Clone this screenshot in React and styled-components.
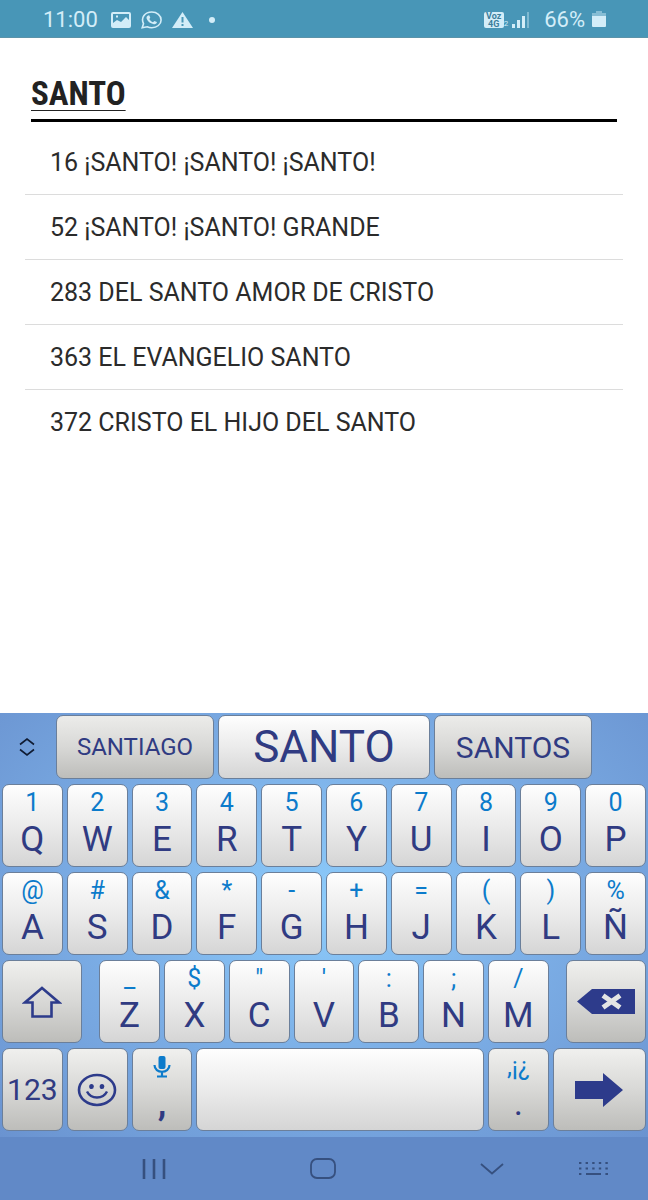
import React from "react";
import styled, { createGlobalStyle } from "styled-components";

const songs = [
  "16 ¡SANTO! ¡SANTO! ¡SANTO!",
  "52 ¡SANTO! ¡SANTO! GRANDE",
  "283 DEL SANTO AMOR DE CRISTO",
  "363 EL EVANGELIO SANTO",
  "372 CRISTO EL HIJO DEL SANTO",
];

const numberRow = [
  ["1", "Q"],
  ["2", "W"],
  ["3", "E"],
  ["4", "R"],
  ["5", "T"],
  ["6", "Y"],
  ["7", "U"],
  ["8", "I"],
  ["9", "O"],
  ["0", "P"],
];

const middleRow = [
  ["@", "A"],
  ["#", "S"],
  ["&", "D"],
  ["*", "F"],
  ["-", "G"],
  ["+", "H"],
  ["=", "J"],
  ["(", "K"],
  [")", "L"],
  ["%", "Ñ"],
];

const bottomRow = [
  ["_", "Z"],
  ["$", "X"],
  ['"', "C"],
  ["'", "V"],
  [":", "B"],
  [";", "N"],
  ["/", "M"],
];

const renderLetters = (letters) =>
  letters.map(([hint, letter]) => (
    <Key key={letter} type="button">
      <Hint>{hint}</Hint>
      <Letter>{letter}</Letter>
    </Key>
  ));

const StatusBar = () => (
  <Status>
    <StatusGroup>
      <span>11:00</span>
      <svg width="20" height="16" viewBox="0 0 20 16">
        <path
          fill="currentColor"
          fillRule="evenodd"
          d="M2 0h16q2 0 2 2v12q0 2-2 2H2q-2 0-2-2V2q0-2 2-2zM2 2v9l4-3 4 2 5-5 3 3V2zM5 3.500h2v2H5z"
        />
      </svg>
      <svg width="21" height="18" viewBox="0 0 21 18">
        <path
          fill="none"
          stroke="currentColor"
          strokeWidth="1.600"
          d="M1.200 16.800l1.300-4.100C-.5 6.500 4 1 10.800 1c5.200 0 9.300 3.500 9.300 7.900s-4.100 7.900-9.300 7.900c-1.700 0-3.200-.3-4.600-1z"
        />
        <path
          fill="currentColor"
          d="M7 4.500l1.200-.2 1.100 2.500-1 1.200c.8 1.600 2.100 2.600 3.700 3.200l1.300-1.300 2.600 1.200c0 1.500-1.500 2.400-3 2.100C9 12.500 6 9.800 5.500 7c0-1.100.6-2 1.500-2.500z"
        />
      </svg>
      <svg width="21" height="16" viewBox="0 0 21 16">
        <path
          fill="currentColor"
          fillRule="evenodd"
          d="M10.500 0L21 16H0zM9.500 5v5.500h2V5zm0 7v2h2v-2z"
        />
      </svg>
      <Dot />
    </StatusGroup>
    <StatusGroup $tight>
      <Network>
        <NetworkBox>
          <span>Voz</span>
          <span>4G</span>
        </NetworkBox>
        <small>2</small>
      </Network>
      <Signal width="18" height="16" viewBox="0 0 18 16">
        <path fill="currentColor" d="M0 12h3v4H0zM5 8h3v8H5zM10 4h3v12h-3z" />
        <path fill="currentColor" opacity=".4" d="M15 0h2v16h-2z" />
      </Signal>
      <span>66%</span>
      <svg width="14" height="17" viewBox="0 0 14 17">
        <path fill="currentColor" opacity=".45" d="M4 0h6v2h4v4H0V2h4z" />
        <path fill="currentColor" d="M0 5h14v10q0 1-1 1H1q-1 0-1-1z" />
      </svg>
    </StatusGroup>
  </Status>
);

const Keyboard = () => (
  <Keys>
    <Suggestions>
      <ExpandButton type="button" aria-label="Expandir">
        <svg width="16" height="18" viewBox="0 0 16 18">
          <path
            fill="none"
            stroke="currentColor"
            strokeWidth="1.600"
            d="M1 6.500L8 1l7 5.500M1 11.500L8 17l7-5.500"
          />
        </svg>
      </ExpandButton>
      <Suggestion type="button" $size={24}>
        SANTIAGO
      </Suggestion>
      <Suggestion type="button" $size={44} $light>
        SANTO
      </Suggestion>
      <Suggestion type="button" $size={30}>
        SANTOS
      </Suggestion>
    </Suggestions>
    <KeyRow>{renderLetters(numberRow)}</KeyRow>
    <KeyRow>{renderLetters(middleRow)}</KeyRow>
    <KeyRow $columns="13fr 2fr repeat(7, 10fr) 2fr 13fr">
      <Key type="button" $dark aria-label="Mayúsculas">
        <svg width="40" height="32" viewBox="0 0 40 32">
          <path
            fill="none"
            stroke="currentColor"
            strokeWidth="2.600"
            d="M20 2L37 16.500H29.500V30.500H10.500V16.500H3z"
          />
        </svg>
      </Key>
      <span />
      {renderLetters(bottomRow)}
      <span />
      <Key type="button" $dark aria-label="Borrar">
        <svg width="58" height="25" viewBox="0 0 58 25">
          <path fill="currentColor" d="M0 12.500L15 0h43v25H15z" />
          <path
            fill="none"
            stroke="#e4e5e4"
            strokeWidth="5"
            d="M26 6.500l17 12M43 6.500l-17 12"
          />
        </svg>
      </Key>
    </KeyRow>
    <KeyRow $columns="10fr 10fr 10fr 45fr 10fr 15fr">
      <Key type="button" $dark>
        <Label>123</Label>
      </Key>
      <Key type="button" $dark aria-label="Emojis">
        <svg width="40" height="34" viewBox="0 0 40 34">
          <ellipse
            cx="20"
            cy="17"
            rx="18"
            ry="15"
            fill="none"
            stroke="currentColor"
            strokeWidth="2.600"
          />
          <ellipse cx="14.500" cy="13.500" rx="2.300" ry="2.600" fill="currentColor" />
          <ellipse cx="25" cy="13.500" rx="2.300" ry="2.600" fill="currentColor" />
          <path
            fill="none"
            stroke="currentColor"
            strokeWidth="2.400"
            d="M10 18.500c4 8 16 8 20 0"
          />
        </svg>
      </Key>
      <Key type="button" $dark>
        <Hint>
          <svg width="18" height="22" viewBox="0 0 18 22">
            <rect x="5.500" y="0" width="7" height="13" rx="2" fill="currentColor" />
            <path
              fill="none"
              stroke="currentColor"
              strokeWidth="2.200"
              d="M1.500 9c0 9 15 9 15 0M9 15v6M4 20.500h10"
            />
          </svg>
        </Hint>
        <Letter $bold>,</Letter>
      </Key>
      <Key type="button" aria-label="Espacio" />
      <Key type="button" $dark>
        <Hint>,¡¿</Hint>
        <Letter>.</Letter>
      </Key>
      <Key type="button" $dark aria-label="Siguiente">
        <svg width="48" height="34" viewBox="0 0 48 34">
          <path fill="currentColor" d="M0 8h28V0l20 17-20 17v-8H0z" />
        </svg>
      </Key>
    </KeyRow>
  </Keys>
);

const Navigation = () => (
  <Nav>
    <NavButton type="button" aria-label="Recientes">
      <svg width="24" height="20" viewBox="0 0 24 20">
        <path stroke="currentColor" strokeWidth="2.600" d="M2 0v20M12 0v20M22 0v20" />
      </svg>
    </NavButton>
    <NavButton type="button" aria-label="Inicio">
      <svg width="26" height="22" viewBox="0 0 26 22">
        <rect
          x="1"
          y="1"
          width="24"
          height="19"
          rx="6"
          fill="none"
          stroke="currentColor"
          strokeWidth="1.800"
        />
      </svg>
    </NavButton>
    <NavButton type="button" aria-label="Atrás">
      <svg width="24" height="12" viewBox="0 0 24 12">
        <path
          fill="none"
          stroke="currentColor"
          strokeWidth="1.800"
          d="M1 1l11 9.500L23 1"
        />
      </svg>
    </NavButton>
    <NavButton type="button" aria-label="Cambiar teclado">
      <svg width="29" height="14" viewBox="0 0 29 14">
        <path
          stroke="currentColor"
          strokeWidth="1.800"
          strokeDasharray="2.400 4.200"
          d="M0 1h29M0 6.500h29"
        />
        <path stroke="currentColor" strokeWidth="1.800" d="M0 12h2.400M7 12h15M26.400 12H29" />
      </svg>
    </NavButton>
  </Nav>
);

const App = () => {
  return (
    <>
      <GlobalStyle />
      <Page>
        <StatusBar />
        <Results>
          <Title>SANTO</Title>
          <SongList>
            {songs.map((song) => (
              <li key={song}>{song}</li>
            ))}
          </SongList>
        </Results>
        <Keyboard />
        <Navigation />
      </Page>
    </>
  );
};

export default App;

const GlobalStyle = createGlobalStyle`
  * {
    box-sizing: border-box;
  }

  body {
    margin: 0;
    background-color: #fff;
    font-family: Roboto, sans-serif;
  }

  button {
    padding: 0;
    border: none;
    background: none;
    font-family: inherit;
    cursor: pointer;
  }

  svg {
    display: block;
    flex-shrink: 0;
  }
`;

const Page = styled.div`
  display: flex;
  flex-direction: column;
  min-height: 100vh;
`;

const Status = styled.header`
  display: flex;
  align-items: center;
  justify-content: space-between;
  height: 38px;
  padding: 2px 42px 0 43px;
  border-bottom: 1px solid #5b93a9;
  background-color: #4896b7;
  color: #d3edf8;
  font-size: 22px;
`;

const StatusGroup = styled.div`
  display: flex;
  align-items: center;
  gap: ${(props) => (props.$tight ? "7px" : "10px")};

  > span:first-child {
    min-width: 58px;
  }
`;

const Dot = styled.i`
  width: 6px;
  height: 6px;
  margin-left: 6px;
  border-radius: 50%;
  background-color: currentColor;
`;

const Network = styled.span`
  display: flex;
  align-items: flex-end;
  justify-content: flex-end;

  small {
    font-size: 8px;
    line-height: 8px;
  }
`;

const NetworkBox = styled.span`
  display: flex;
  flex-direction: column;
  align-items: center;
  width: 20px;
  height: 16px;
  border-radius: 2px;
  background-color: #d3edf8;
  color: #3c7f9d;
  font-size: 9px;
  font-weight: bold;
  line-height: 8px;
`;

const Signal = styled.svg`
  margin: 0 7px 0 -3px;
`;

const Results = styled.main`
  flex: 1;
  padding: 34px 25px 0;
`;

const Title = styled.h1`
  margin: 0 6px 8px;
  padding-bottom: 3px;
  border-bottom: 3px solid #000;
  color: #222;
  font-family: "Roboto Condensed", "Liberation Sans Narrow", Roboto, sans-serif;
  font-size: 33px;
  font-weight: bold;
  line-height: 44px;
  text-decoration: underline;
  text-decoration-thickness: 1px;
  text-underline-offset: 5px;
`;

const SongList = styled.ul`
  margin: 0;
  padding: 0;
  list-style: none;

  li {
    height: 65px;
    padding-left: 25px;
    color: #2b2b2b;
    font-size: 25px;
    line-height: 66px;

    &:not(:last-child) {
      border-bottom: 1px solid #dcdcdc;
    }
  }
`;

const Keys = styled.section`
  display: flex;
  flex-direction: column;
  gap: 5px;
  padding: 2px 0 6px;
  background: radial-gradient(ellipse at 50% 45%, #8ccbfb 0%, #7bade5 50%, #6a93d0 100%);
`;

const Suggestions = styled.div`
  display: grid;
  grid-template-columns: 54fr 162fr 216fr 162fr 54fr;
  height: 64px;
`;

const KeyRow = styled.div`
  display: grid;
  grid-template-columns: ${(props) => props.$columns || "repeat(10, 1fr)"};
  height: 83px;
`;

const Key = styled.button`
  display: flex;
  flex-direction: column;
  align-items: center;
  justify-content: center;
  min-width: 0;
  margin: 0 2px;
  border: 1px solid #6b7f9a;
  border-radius: 7px;
  background: ${(props) =>
    props.$dark
      ? "linear-gradient(#f0f0ee, #d8d8d6 50%, #bdbdba)"
      : "linear-gradient(#fefefe, #ebebeb 50%, #d5d5d5)"};
  color: #2d3b8b;
`;

const Hint = styled.span`
  display: flex;
  align-items: center;
  height: 36px;
  color: #0c7bcb;
  font-size: 25px;
  line-height: 36px;
`;

const Letter = styled.span`
  height: 45px;
  color: #303b82;
  font-size: 35px;
  font-weight: ${(props) => (props.$bold ? "bold" : "normal")};
  line-height: 38px;
`;

const Label = styled.span`
  color: #303b82;
  font-size: 30px;
`;

const ExpandButton = styled.button`
  display: flex;
  align-items: center;
  justify-content: center;
  color: #101c33;
`;

const Suggestion = styled.button`
  margin: 0 2px;
  border: 1px solid #6b7f9a;
  border-radius: 7px;
  background: ${(props) =>
    props.$light
      ? "linear-gradient(#fefefe, #ebebeb 50%, #d5d5d5)"
      : "linear-gradient(#ececea, #d8d8d6 50%, #bdbdba)"};
  color: #303b82;
  font-size: ${(props) => props.$size}px;
`;

const Nav = styled.nav`
  display: grid;
  grid-template-columns: 168fr 169fr 169fr 34fr;
  height: 63px;
  padding: 0 38px 0 70px;
  background-color: #6189c7;
`;

const NavButton = styled.button`
  display: flex;
  align-items: center;
  justify-content: center;
  color: #36507f;
`;
